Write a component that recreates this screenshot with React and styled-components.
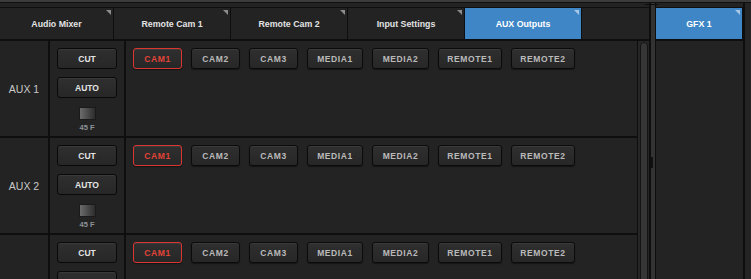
import React from 'react';
import styled, { createGlobalStyle } from 'styled-components';

const GlobalStyle = createGlobalStyle`
    html, body {
        margin: 0;
        padding: 0;
        background: #232323;
        overflow: hidden;
    }
    body {
        font-family: "Liberation Sans", Arial, sans-serif;
    }
`

const TABS = [
    { label: 'Audio Mixer', width: 114 },
    { label: 'Remote Cam 1', width: 117 },
    { label: 'Remote Cam 2', width: 117 },
    { label: 'Input Settings', width: 117 },
    { label: 'AUX Outputs', width: 117, active: true },
]

const SOURCES = [
    { label: 'CAM1', width: 49, live: true },
    { label: 'CAM2', width: 49 },
    { label: 'CAM3', width: 49 },
    { label: 'MEDIA1', width: 56 },
    { label: 'MEDIA2', width: 57 },
    { label: 'REMOTE1', width: 64 },
    { label: 'REMOTE2', width: 64 },
]

const AUX_ROWS = ['AUX 1', 'AUX 2', 'AUX 3']

const App = () => {
    return (
        <>
            <GlobalStyle />
            <Frame>
                <TopStrip />
                <Workspace>
                    <MainPane>
                        <TabBar>
                            {TABS.map(tab => (
                                <Tab key={tab.label} $width={tab.width} $active={tab.active}>
                                    {tab.label}
                                </Tab>
                            ))}
                            <EmptyTab />
                        </TabBar>
                        <Body>
                            <RowList>
                                {AUX_ROWS.map((name, i) => (
                                    <AuxRow key={name}>
                                        <LabelCell>{i < 2 ? name : ''}</LabelCell>
                                        <ControlCell>
                                            <TransitionButton>CUT</TransitionButton>
                                            <TransitionButton>AUTO</TransitionButton>
                                            <FadeSwatch />
                                            <FadeLabel>45 F</FadeLabel>
                                        </ControlCell>
                                        <SourceCell>
                                            {SOURCES.map(src => (
                                                <SourceButton key={src.label} $width={src.width} $live={src.live}>
                                                    {src.label}
                                                </SourceButton>
                                            ))}
                                        </SourceCell>
                                    </AuxRow>
                                ))}
                            </RowList>
                            <ScrollTrack>
                                <ScrollThumb />
                            </ScrollTrack>
                        </Body>
                    </MainPane>
                    <Splitter />
                    <SidePane>
                        <TabBar>
                            <Tab $width={87} $active>GFX 1</Tab>
                        </TabBar>
                        <SideBody />
                    </SidePane>
                    <Edge />
                </Workspace>
            </Frame>
        </>
    )
}

export default App


const Frame = styled.div`
    width: 751px;
    height: 279px;
    display: flex;
    flex-direction: column;
    background: #232323;
    overflow: hidden;
`

const TopStrip = styled.div`
    height: 2px;
    background: #3b3b3b;
    border-bottom: 1px solid #101010;
    flex-shrink: 0;
`

const Workspace = styled.div`
    flex: 1;
    display: flex;
    min-height: 0;
`

const MainPane = styled.div`
    width: 649px;
    display: flex;
    flex-direction: column;
    flex-shrink: 0;
`

const TabBar = styled.div`
    display: flex;
    margin-top: 4px;
    border-top: 1px solid #0e0e0e;
    border-bottom: 2px solid #0e0e0e;
    height: 31px;
    flex-shrink: 0;
`

const Tab = styled.div`
    position: relative;
    width: ${p => p.$width}px;
    box-sizing: border-box;
    border-right: 1px solid #0e0e0e;
    background: ${p => p.$active ? '#3e86c6' : '#232323'};
    color: ${p => p.$active ? '#ffffff' : '#e2e2e2'};
    font-size: 8.8px;
    font-weight: bold;
    display: flex;
    align-items: center;
    justify-content: center;
    flex-shrink: 0;

    &::after {
        content: '';
        position: absolute;
        top: 2px;
        right: 2px;
        border-style: solid;
        border-width: 0 5px 5px 0;
        border-color: transparent ${p => p.$active ? '#a8c8e6' : '#8c8c8c'} transparent transparent;
    }
`

const EmptyTab = styled.div`
    flex: 1;
    background: #232323;
`

const Body = styled.div`
    flex: 1;
    display: flex;
    min-height: 0;
`

const RowList = styled.div`
    width: 637px;
    display: flex;
    flex-direction: column;
    border-right: 1px solid #0e0e0e;
`

const AuxRow = styled.div`
    display: flex;
    height: 95px;
    flex-shrink: 0;
    border-bottom: 2px solid #0e0e0e;
`

const LabelCell = styled.div`
    width: 48px;
    border-right: 2px solid #0e0e0e;
    display: flex;
    align-items: center;
    justify-content: center;
    color: #c8c8c8;
    font-size: 10.5px;
`

const ControlCell = styled.div`
    width: 76px;
    border-right: 2px solid #0e0e0e;
    display: flex;
    flex-direction: column;
    align-items: center;
    padding-top: 7px;
    box-sizing: border-box;
`

const TransitionButton = styled.div`
    width: 60px;
    height: 21px;
    box-sizing: border-box;
    margin-bottom: 8px;
    border: 1px solid #090909;
    border-radius: 3px;
    background: linear-gradient(#2f2f2f, #272727);
    box-shadow: inset 0 1px 0 #3a3a3a;
    color: #e4e4e4;
    font-size: 8.5px;
    font-weight: bold;
    display: flex;
    align-items: center;
    justify-content: center;
`

const FadeSwatch = styled.div`
    width: 17px;
    height: 13px;
    margin-top: 1px;
    box-sizing: border-box;
    border: 1px solid #1a1a1a;
    background: linear-gradient(to right, #6c6c6c, #2c2c2c);
`

const FadeLabel = styled.div`
    margin-top: 3px;
    color: #8e9298;
    font-size: 7.5px;
    font-weight: bold;
`

const SourceCell = styled.div`
    flex: 1;
    display: flex;
    align-items: flex-start;
    gap: 9px;
    padding: 7px 0 0 7px;
`

const SourceButton = styled.div`
    width: ${p => p.$width}px;
    height: 21px;
    box-sizing: border-box;
    border: ${p => p.$live ? '1.5px solid #d9372f' : '1px solid #0b0b0b'};
    border-radius: 3px;
    background: linear-gradient(#2f2f2f, #272727);
    box-shadow: inset 0 1px 0 #3a3a3a, 0 1px 1px #151515;
    color: ${p => p.$live ? '#e24338' : '#bababa'};
    font-size: 8.5px;
    font-weight: bold;
    letter-spacing: 0.6px;
    display: flex;
    align-items: center;
    justify-content: center;
    flex-shrink: 0;
`

const ScrollTrack = styled.div`
    flex: 1;
    background: #262626;
    display: flex;
    justify-content: center;
    padding-top: 1px;
`

const ScrollThumb = styled.div`
    width: 8px;
    height: 300px;
    box-sizing: border-box;
    border: 1px solid #141414;
    border-radius: 4px;
    background: #363636;
`

const Splitter = styled.div`
    position: relative;
    width: 4px;
    border-left: 2px solid #0e0e0e;
    border-right: 1px solid #0e0e0e;
    background: #333333;
    flex-shrink: 0;

    &::before {
        content: '';
        position: absolute;
        top: 1px;
        left: -6px;
        width: 13px;
        height: 1px;
        background: #0c0c0c;
    }

    &::after {
        content: '';
        position: absolute;
        top: 154px;
        left: 0;
        width: 2px;
        height: 11px;
        background: #111111;
    }
`

const SidePane = styled.div`
    width: 87px;
    display: flex;
    flex-direction: column;
    flex-shrink: 0;
    border-right: 2px solid #0e0e0e;
`

const SideBody = styled.div`
    flex: 1;
    background: #232323;
`

const Edge = styled.div`
    flex: 1;
    background: #242424;
`
